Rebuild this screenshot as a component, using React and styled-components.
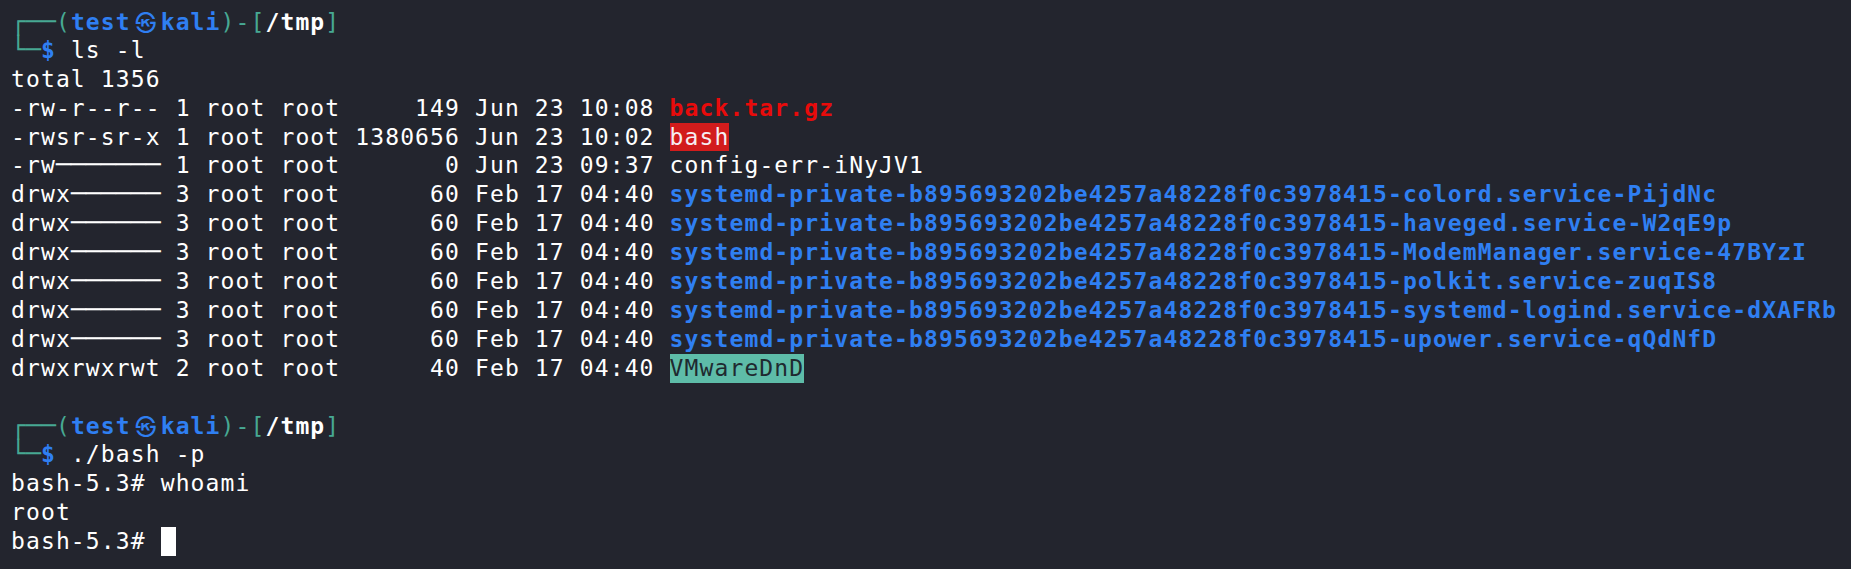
import React from 'react';
import styled, { createGlobalStyle } from 'styled-components';

// one terminal cell is ~14.97px wide, one row ~28.9px tall
const CH = 14.97;
const ROW = 28.9;

const BG = '#23252e';
const FG = '#ffffff';
const BLUE = '#2f7ff2';
const TEAL = '#47a993';
const RED = '#e80b0b';

const GlobalStyle = createGlobalStyle`
    html, body {
        margin: 0;
        padding: 0;
        background: ${BG};
    }
    body {
        overflow: hidden;
    }
`;

const Screen = styled.div`
    width: 1851px;
    height: 569px;
    box-sizing: border-box;
    padding: 7px 11px 0;
    background: ${BG};
    color: ${FG};
    font-family: "DejaVu Sans Mono", "Liberation Mono", monospace;
    font-size: 23px;
    letter-spacing: 1.12px;
    display: flex;
    flex-direction: column;
`;

const Row = styled.div`
    height: ${ROW}px;
    line-height: ${ROW}px;
    white-space: pre;
`;

const Seg = styled.span`
    color: ${props => props.$color || 'inherit'};
    font-weight: ${props => (props.$bold ? 700 : 400)};
    ${props => props.$bg && `
        display: inline-block;
        height: ${ROW}px;
        background: ${props.$bg};
    `}
`;

// box drawing lines: sized so glyphs fill a whole cell and join up
const Rule = styled.span`
    font-size: 24.87px;
    letter-spacing: 0;
    color: ${props => props.$color || 'inherit'};
`;

const Skull = styled.span`
    display: inline-block;
    width: ${CH * 2}px;
    text-align: center;
    font-family: "Noto Sans CJK JP", "DejaVu Sans", sans-serif;
    font-size: 21px;
    letter-spacing: 0;
    color: ${BLUE};
`;

const Cursor = styled.span`
    display: inline-block;
    width: ${CH}px;
    height: ${ROW}px;
    vertical-align: top;
    background: #ffffff;
`;

const Prompt = ({ dir }) => (
    <>
        <Row>
            <Rule $color={TEAL}>┌──</Rule>
            <Seg $color={TEAL}>(</Seg>
            <Seg $color={BLUE} $bold>test</Seg>
            <Skull>㉿</Skull>
            <Seg $color={BLUE} $bold>kali</Seg>
            <Seg $color={TEAL}>)-[</Seg>
            <Seg $bold>{dir}</Seg>
            <Seg $color={TEAL}>]</Seg>
        </Row>
    </>
);

const Command = ({ children }) => (
    <Row>
        <Rule $color={TEAL}>└─</Rule>
        <Seg $color={BLUE} $bold>$</Seg>
        <Seg> {children}</Seg>
    </Row>
);

const entries = [
    { perm: '-rw-r--r--', links: 1, size: 149, date: 'Jun 23 10:08', name: 'back.tar.gz', kind: 'archive' },
    { perm: '-rwsr-sr-x', links: 1, size: 1380656, date: 'Jun 23 10:02', name: 'bash', kind: 'suid' },
    { perm: '-rw', rule: 7, links: 1, size: 0, date: 'Jun 23 09:37', name: 'config-err-iNyJV1' },
    { perm: 'drwx', rule: 6, links: 3, size: 60, date: 'Feb 17 04:40', name: 'systemd-private-b895693202be4257a48228f0c3978415-colord.service-PijdNc', kind: 'dir' },
    { perm: 'drwx', rule: 6, links: 3, size: 60, date: 'Feb 17 04:40', name: 'systemd-private-b895693202be4257a48228f0c3978415-haveged.service-W2qE9p', kind: 'dir' },
    { perm: 'drwx', rule: 6, links: 3, size: 60, date: 'Feb 17 04:40', name: 'systemd-private-b895693202be4257a48228f0c3978415-ModemManager.service-47BYzI', kind: 'dir' },
    { perm: 'drwx', rule: 6, links: 3, size: 60, date: 'Feb 17 04:40', name: 'systemd-private-b895693202be4257a48228f0c3978415-polkit.service-zuqIS8', kind: 'dir' },
    { perm: 'drwx', rule: 6, links: 3, size: 60, date: 'Feb 17 04:40', name: 'systemd-private-b895693202be4257a48228f0c3978415-systemd-logind.service-dXAFRb', kind: 'dir' },
    { perm: 'drwx', rule: 6, links: 3, size: 60, date: 'Feb 17 04:40', name: 'systemd-private-b895693202be4257a48228f0c3978415-upower.service-qQdNfD', kind: 'dir' },
    { perm: 'drwxrwxrwt', links: 2, size: 40, date: 'Feb 17 04:40', name: 'VMwareDnD', kind: 'sticky' },
];

const nameStyle = {
    archive: { $color: RED, $bold: true },
    suid: { $bg: '#d21c1c', $color: '#f6eef2' },
    dir: { $color: BLUE, $bold: true },
    sticky: { $bg: '#5ebca8', $color: '#1f2a30' },
};

const Entry = ({ e }) => (
    <Row>
        <Seg>{e.perm}</Seg>
        {e.rule && <Rule>{'─'.repeat(e.rule)}</Rule>}
        <Seg>{` ${e.links} root root ${String(e.size).padStart(7)} ${e.date} `}</Seg>
        <Seg {...(nameStyle[e.kind] || {})}>{e.name}</Seg>
    </Row>
);

const App = () => {
    return (
        <>
            <GlobalStyle />
            <Screen>
                <Prompt dir="/tmp" />
                <Command>ls -l</Command>
                <Row>total 1356</Row>
                {entries.map(e => <Entry key={e.name} e={e} />)}
                <Row />
                <Prompt dir="/tmp" />
                <Command>./bash -p</Command>
                <Row>bash-5.3# whoami</Row>
                <Row>root</Row>
                <Row>bash-5.3# <Cursor /></Row>
            </Screen>
        </>
    );
};

export default App;
